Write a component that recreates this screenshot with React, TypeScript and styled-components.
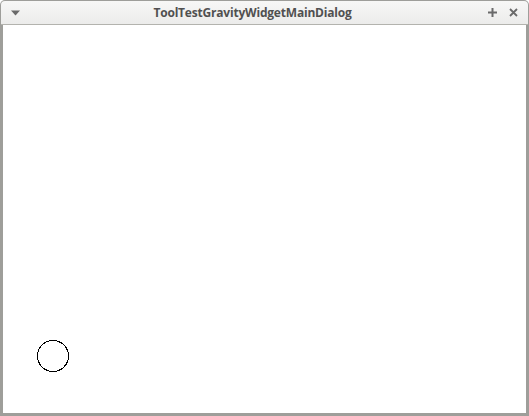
import React from "react";
import styled, { createGlobalStyle } from "styled-components";

const Global = createGlobalStyle`
    html, body {
        margin: 0;
        padding: 0;
        background: #ffffff;
    }
    #root {
        width: 529px;
        height: 416px;
    }
`;

const Window = styled.div`
    width: 529px;
    height: 416px;
    box-sizing: border-box;
    display: flex;
    flex-direction: column;
    background: #9e9e9a;
    border-radius: 5px 5px 0 0;
    overflow: hidden;
`;

const TitleBar = styled.div`
    height: 23px;
    flex: none;
    display: grid;
    grid-template-columns: 60px 1fr 60px;
    align-items: center;
    margin: 1px 1px 0 1px;
    background: linear-gradient(#f7f7f6, #ececeb);
    border-radius: 4px 4px 0 0;
    border-bottom: 1px solid #b3b3ae;
    font: bold 12px "Open Sans", "DejaVu Sans", sans-serif;
    color: #505050;
`;

const Title = styled.div`
    text-align: center;
    letter-spacing: -0.2px;
    padding-right: 24px;
`;

const LeftButtons = styled.div`
    display: flex;
    padding-left: 10px;
`;

const RightButtons = styled.div`
    display: flex;
    justify-content: flex-end;
    gap: 12px;
    padding-right: 10px;
`;

const Canvas = styled.div`
    position: relative;
    flex: 1;
    margin: 0 3px 3px 3px;
    background: #ffffff;
`;

const Ball = styled.svg`
    position: absolute;
    left: 34px;
    top: 315px;
`;

export default function App() {
    return (
        <>
            <Global />
            <Window>
                <TitleBar>
                    <LeftButtons>
                        <svg width="9" height="6" viewBox="0 0 9 6">
                            <path d="M0 0.5 H9 L4.5 5.5 Z" fill="#6a6a6a" />
                        </svg>
                    </LeftButtons>
                    <Title>ToolTestGravityWidgetMainDialog</Title>
                    <RightButtons>
                        <svg width="9" height="9" viewBox="0 0 9 9">
                            <path d="M4.5 0 V9 M0 4.5 H9" stroke="#6a6a6a" strokeWidth="2" />
                        </svg>
                        <svg width="9" height="9" viewBox="0 0 9 9">
                            <path d="M1 1 L8 8 M8 1 L1 8" stroke="#6a6a6a" strokeWidth="1.8" />
                        </svg>
                    </RightButtons>
                </TitleBar>
                <Canvas>
                    <Ball width="34" height="34" viewBox="0 0 34 34" shapeRendering="crispEdges">
                        <circle cx="16" cy="16" r="15.5" fill="none" stroke="#000" strokeWidth="1" />
                    </Ball>
                </Canvas>
            </Window>
        </>
    );
}
